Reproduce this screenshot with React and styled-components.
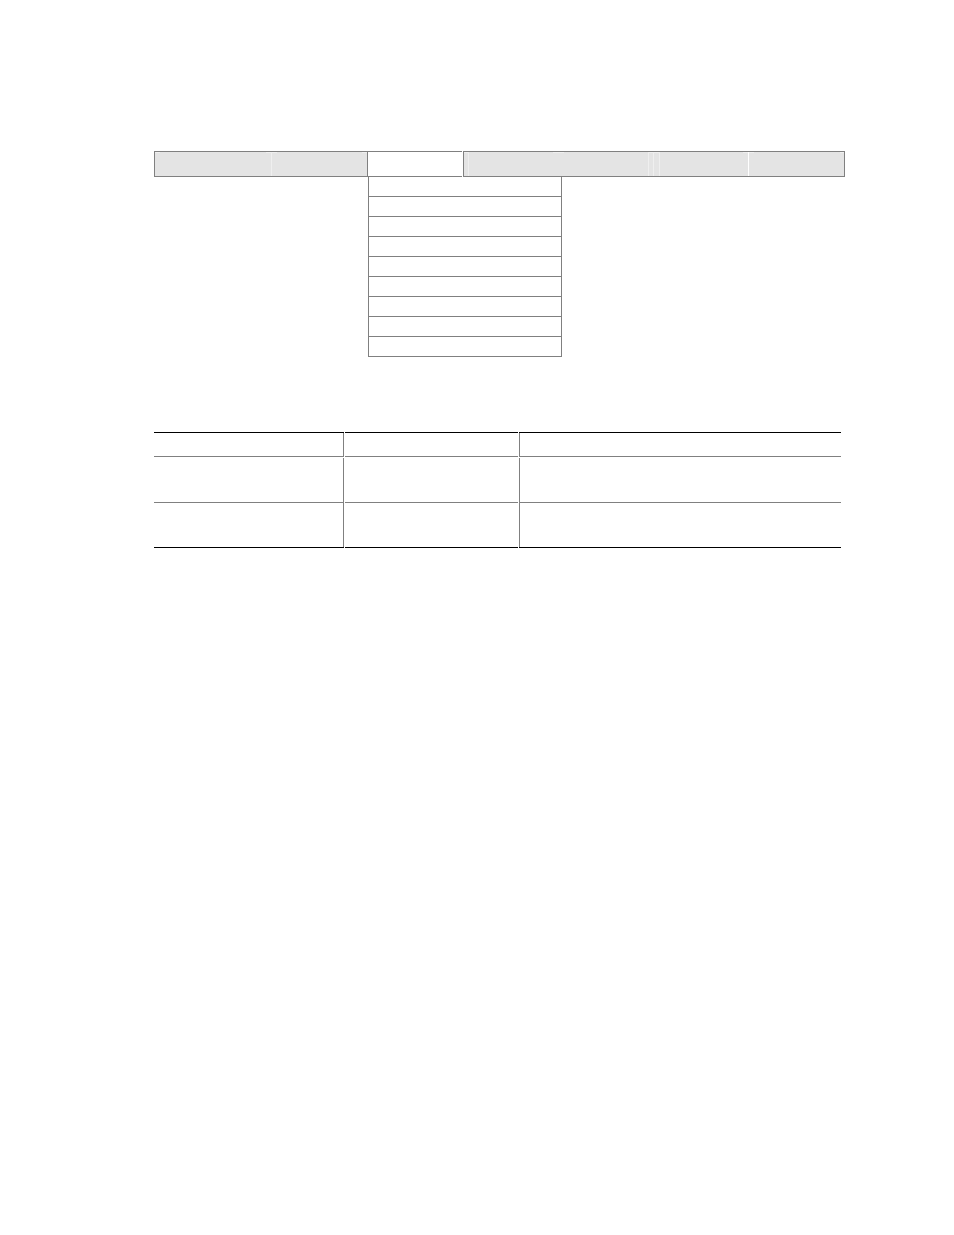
import React from 'react';
import styled, { createGlobalStyle } from 'styled-components';

const GlobalStyle = createGlobalStyle`
  body {
    margin: 0;
    background: #fff;
    font-family: "Liberation Sans", Arial, sans-serif;
  }
`;

const line = '#808080';
const soft = '#efefef';
const shine = '#f0f0f0';

const Page = styled.main`
  padding: 151px 109px 80px 153px;
`;

const MenuArea = styled.nav`
  display: grid;
  grid-template-columns: 117fr 96fr 96fr 95fr 95fr 95fr 97fr;
  margin-left: 1px;
`;

/* The short strokes along the top sit where two neighbouring tabs meet */
const Tab = styled.button`
  height: 26px;
  padding: 0;
  border: 0;
  border-radius: 0;
  background-color: #e4e4e4;
  background-repeat: no-repeat;
  background-image:
    linear-gradient(${line}, ${line}),
    linear-gradient(${line}, ${line}),
    linear-gradient(${line}, ${line}),
    linear-gradient(${(p) => p.$edge}, ${(p) => p.$edge}),
    linear-gradient(${soft}, ${soft}),
    linear-gradient(${shine}, ${shine}),
    linear-gradient(${shine}, ${shine});
  background-size:
    100% 1px,
    100% 1px,
    ${(p) => (p.$last ? '1px' : '0')} 100%,
    1px 100%,
    ${(p) => (p.$inner ? '1px' : '0')} 100%,
    6px 1px,
    5px 1px;
  background-position:
    0 0,
    0 100%,
    100% 0,
    0 0,
    ${(p) => p.$inner || '0'} 0,
    0 1px,
    100% 1px;
`;

const ActiveTab = styled(Tab)`
  margin-right: 1px;
  background-color: #fff;
  background-size: 100% 1px, 100% 1px, 0 100%, 1px 100%, 0 0, 0 0, 0 0;
`;

const MenuList = styled.ul`
  grid-column: 3 / 6;
  width: 194px;
  box-sizing: border-box;
  margin: 0 0 0 1px;
  padding: 0;
  list-style: none;
  border-left: 1px solid ${line};
  border-right: 1px solid ${line};
`;

const MenuItem = styled.li`
  height: 19px;
  border-bottom: 1px solid ${line};
`;

const Table = styled.table`
  width: calc(100% - 3px);
  margin-top: 75px;
  table-layout: fixed;
  border-collapse: separate;
  border-spacing: 1px 0;
`;

const Column = styled.col`
  width: ${(p) => p.$width};
`;

const rule = {
  right: `inset -1px 0 0 ${line}`,
  left: `inset 1px 0 0 ${line}`,
};

const HeadCell = styled.th`
  box-sizing: border-box;
  height: 25px;
  padding: 0;
  border-top: 1px solid #000;
  border-bottom: 1px solid ${line};
  box-shadow: ${(p) => rule[p.$rule] || 'none'};
`;

const Cell = styled.td`
  box-sizing: border-box;
  height: ${(p) => (p.$last ? '45px' : '46px')};
  padding: 0;
  border-top: ${(p) => (p.$last ? '0' : '1px solid #fff')};
  border-bottom: 1px solid ${(p) => (p.$last ? '#000' : line)};
  box-shadow: ${(p) => rule[p.$rule] || 'none'};
`;

const tabs = [
  { edge: line },
  { edge: soft },
  { edge: line, active: true },
  { edge: line, inner: '5px' },
  { edge: 'transparent', inner: '90px' },
  { edge: soft, inner: '6px' },
  { edge: '#fff', last: true },
];

const items = Array.from({ length: 9 });
const rules = ['right', 'none', 'left'];
const rows = [0, 1];

const App = () => {
  return (
    <>
      <GlobalStyle />
      <Page>
        <MenuArea>
          {tabs.map((tab, index) => {
            const Item = tab.active ? ActiveTab : Tab;
            return (
              <Item
                key={index}
                type="button"
                aria-label={`Menu ${index + 1}`}
                $edge={tab.edge}
                $inner={tab.inner}
                $last={tab.last}
              />
            );
          })}
          <MenuList>
            {items.map((_, index) => (
              <MenuItem key={index} />
            ))}
          </MenuList>
        </MenuArea>

        <Table>
          <colgroup>
            <Column $width="190px" />
            <Column $width="173px" />
            <Column $width="auto" />
          </colgroup>
          <thead>
            <tr>
              {rules.map((side) => (
                <HeadCell key={side} scope="col" $rule={side} />
              ))}
            </tr>
          </thead>
          <tbody>
            {rows.map((row) => (
              <tr key={row}>
                {rules.map((side) => (
                  <Cell key={side} $rule={side} $last={row === rows.length - 1} />
                ))}
              </tr>
            ))}
          </tbody>
        </Table>
      </Page>
    </>
  );
};

export default App;
